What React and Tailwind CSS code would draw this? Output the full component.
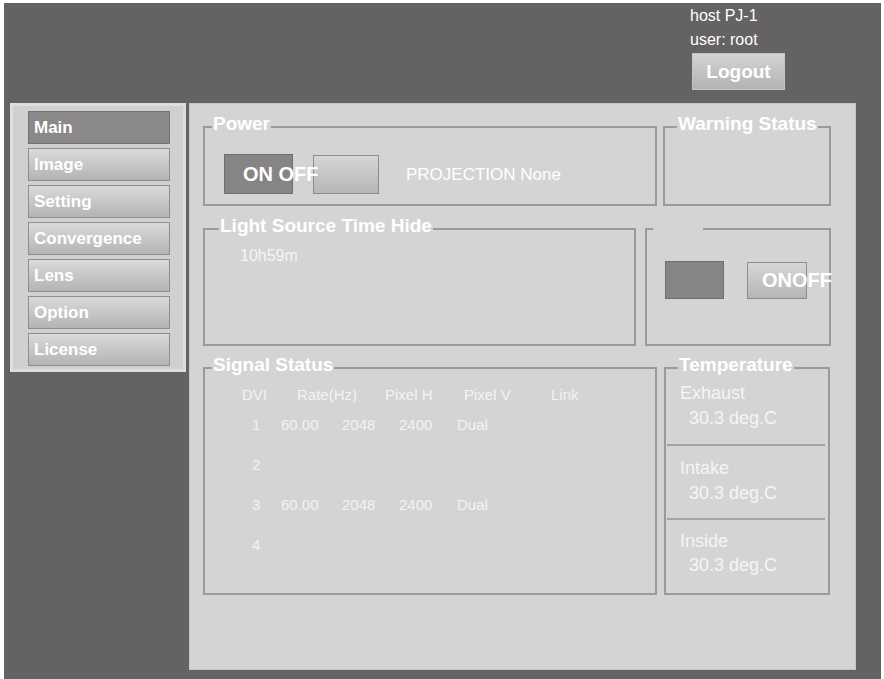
import React from "react"

const MENU = ["Main", "Image", "Setting", "Convergence", "Lens", "Option", "License"]

// ── fieldset box with a legend sitting on the top border ───────────────
const Box = ({ title, legendCls = "ml-[7px]", cls = "", children }) => (
  <fieldset className={`border-2 border-[#9a9a9a] ${cls}`}>
    <legend className={`${legendCls} px-[1px] pb-[6px] text-[19px] leading-[18px] font-bold text-white whitespace-nowrap`}>
      {title}
    </legend>
    {children}
  </fieldset>
)

const HEAD = [
  { t: "DVI", w: "w-[55px]" },
  { t: "Rate(Hz)", w: "w-[88px]" },
  { t: "Pixel H", w: "w-[79px]" },
  { t: "Pixel V", w: "w-[87px]" },
  { t: "Link", w: "" },
]

const ROWS = [
  ["1", "60.00", "2048", "2400", "Dual"],
  ["2"],
  ["3", "60.00", "2048", "2400", "Dual"],
  ["4"],
]
const ROW_W = ["w-[29px]", "w-[61px]", "w-[57px]", "w-[58px]", ""]

const TEMPS = [
  { label: "Exhaust", cls: "h-[66px] pt-[3px] border-b-2 border-[#a3a3a3]", gap: "mt-[5px]" },
  { label: "Intake", cls: "h-[74px] pt-[12px] border-b-2 border-[#a3a3a3]", gap: "mt-[5px]" },
  { label: "Inside", cls: "pt-[11px]", gap: "mt-[4px]" },
]

export default function App() {
  return (
    <div className="w-[884px] h-[679px] bg-white pt-[3px] pl-[4px] pr-[3px] font-['Liberation_Sans',Arial,sans-serif]">
      <div className="h-full bg-[#646262] flex flex-col">
        {/* header */}
        <div className="h-[100px] pl-[686px] pt-[1px] text-white text-[16px] leading-[24px]">
          <div>host PJ-1</div>
          <div>user: root</div>
          <button className="mt-[1px] ml-[2px] w-[93px] h-[37px] bg-gradient-to-b from-[#d4d4d4] to-[#b3b3b3] border border-[#c4c4c4] text-white font-bold text-[19px] leading-none">
            Logout
          </button>
        </div>

        <div className="flex items-start pl-[6px] gap-[3px]">
          {/* side menu */}
          <div className="w-[176px] h-[269px] bg-[#d0d0d0] border-[3px] border-[#dedede] pl-[15px] pt-[5px] flex flex-col gap-[4px]">
            {MENU.map((m, i) => (
              <div
                key={m}
                className={`w-[142px] h-[33px] flex items-center pl-[5px] text-white font-bold text-[17px] border ${
                  i === 0
                    ? "bg-[#8a8888] border-[#747272]"
                    : "bg-gradient-to-b from-[#dadada] to-[#b4b4b4] border-[#8e8e8e]"
                }`}
              >
                {m}
              </div>
            ))}
          </div>

          {/* main panel */}
          <div className="w-[667px] h-[567px] bg-[#d4d4d4] border border-[#c6c6c6] pt-[11px] pl-[13px] flex flex-col">
            <div className="flex gap-[6px]">
              <Box title="Power" cls="w-[454px] h-[91px]">
                <div className="flex items-center mt-[15px] pl-[19px]">
                  <div className="w-[69px] h-[40px] bg-[#868484] border border-[#6f6d6d] flex items-center pl-[18px]">
                    <span className="relative z-10 whitespace-nowrap text-white font-bold text-[20px]">ON OFF</span>
                  </div>
                  <div className="ml-[20px] w-[66px] h-[39px] bg-gradient-to-b from-[#d6d6d6] to-[#b6b6b6] border border-[#8c8c8c]" />
                  <span className="ml-[27px] pt-[2px] text-white text-[17px]">PROJECTION None</span>
                </div>
              </Box>
              <Box title="Warning Status" legendCls="ml-[12px]" cls="w-[168px] h-[91px]" />
            </div>

            <div className="flex gap-[9px] mt-[11px]">
              <Box title="Light Source Time Hide" legendCls="ml-[14px]" cls="w-[433px] h-[129px]">
                <div className="mt-[6px] pl-[35px] text-[16px] leading-[18px] text-[#f4f4f4]">10h59m</div>
              </Box>
              <Box title={<span className="inline-block w-[48px]">&nbsp;</span>} legendCls="ml-[6px]" cls="w-[186px] h-[129px]">
                <div className="flex items-center mt-[20px] pl-[18px]">
                  <div className="w-[59px] h-[38px] bg-[#868484] border border-[#6f6d6d]" />
                  <div className="ml-[23px] w-[60px] h-[37px] bg-gradient-to-b from-[#d6d6d6] to-[#b6b6b6] border border-[#8c8c8c] flex items-center pl-[14px]">
                    <span className="whitespace-nowrap text-white font-bold text-[20px]">ONOFF</span>
                  </div>
                </div>
              </Box>
            </div>

            <div className="flex gap-[7px] mt-[10px]">
              <Box title="Signal Status" cls="w-[454px] h-[239px]">
                <div className="text-[15px] leading-[18px] text-[#f3f3f3]">
                  <div className="flex mt-[6px] pl-[37px]">
                    {HEAD.map((h) => (
                      <span key={h.t} className={`${h.w} whitespace-nowrap`}>{h.t}</span>
                    ))}
                  </div>
                  {ROWS.map((r, i) => (
                    <div key={i} className={`flex h-[18px] pl-[47px] ${i === 0 ? "mt-[12px]" : "mt-[22px]"}`}>
                      {r.map((c, j) => (
                        <span key={j} className={ROW_W[j]}>{c}</span>
                      ))}
                    </div>
                  ))}
                </div>
              </Box>
              <Box title="Temperature" legendCls="ml-[12px]" cls="w-[166px] h-[239px]">
                <div className="ml-[1px] mr-[3px] text-[18px] leading-[20px] text-[#f5f5f5]">
                  {TEMPS.map((s) => (
                    <div key={s.label} className={s.cls}>
                      <div className="pl-[13px]">{s.label}</div>
                      <div className={`pl-[22px] ${s.gap}`}>30.3 deg.C</div>
                    </div>
                  ))}
                </div>
              </Box>
            </div>
          </div>
        </div>
      </div>
    </div>
  )
}
